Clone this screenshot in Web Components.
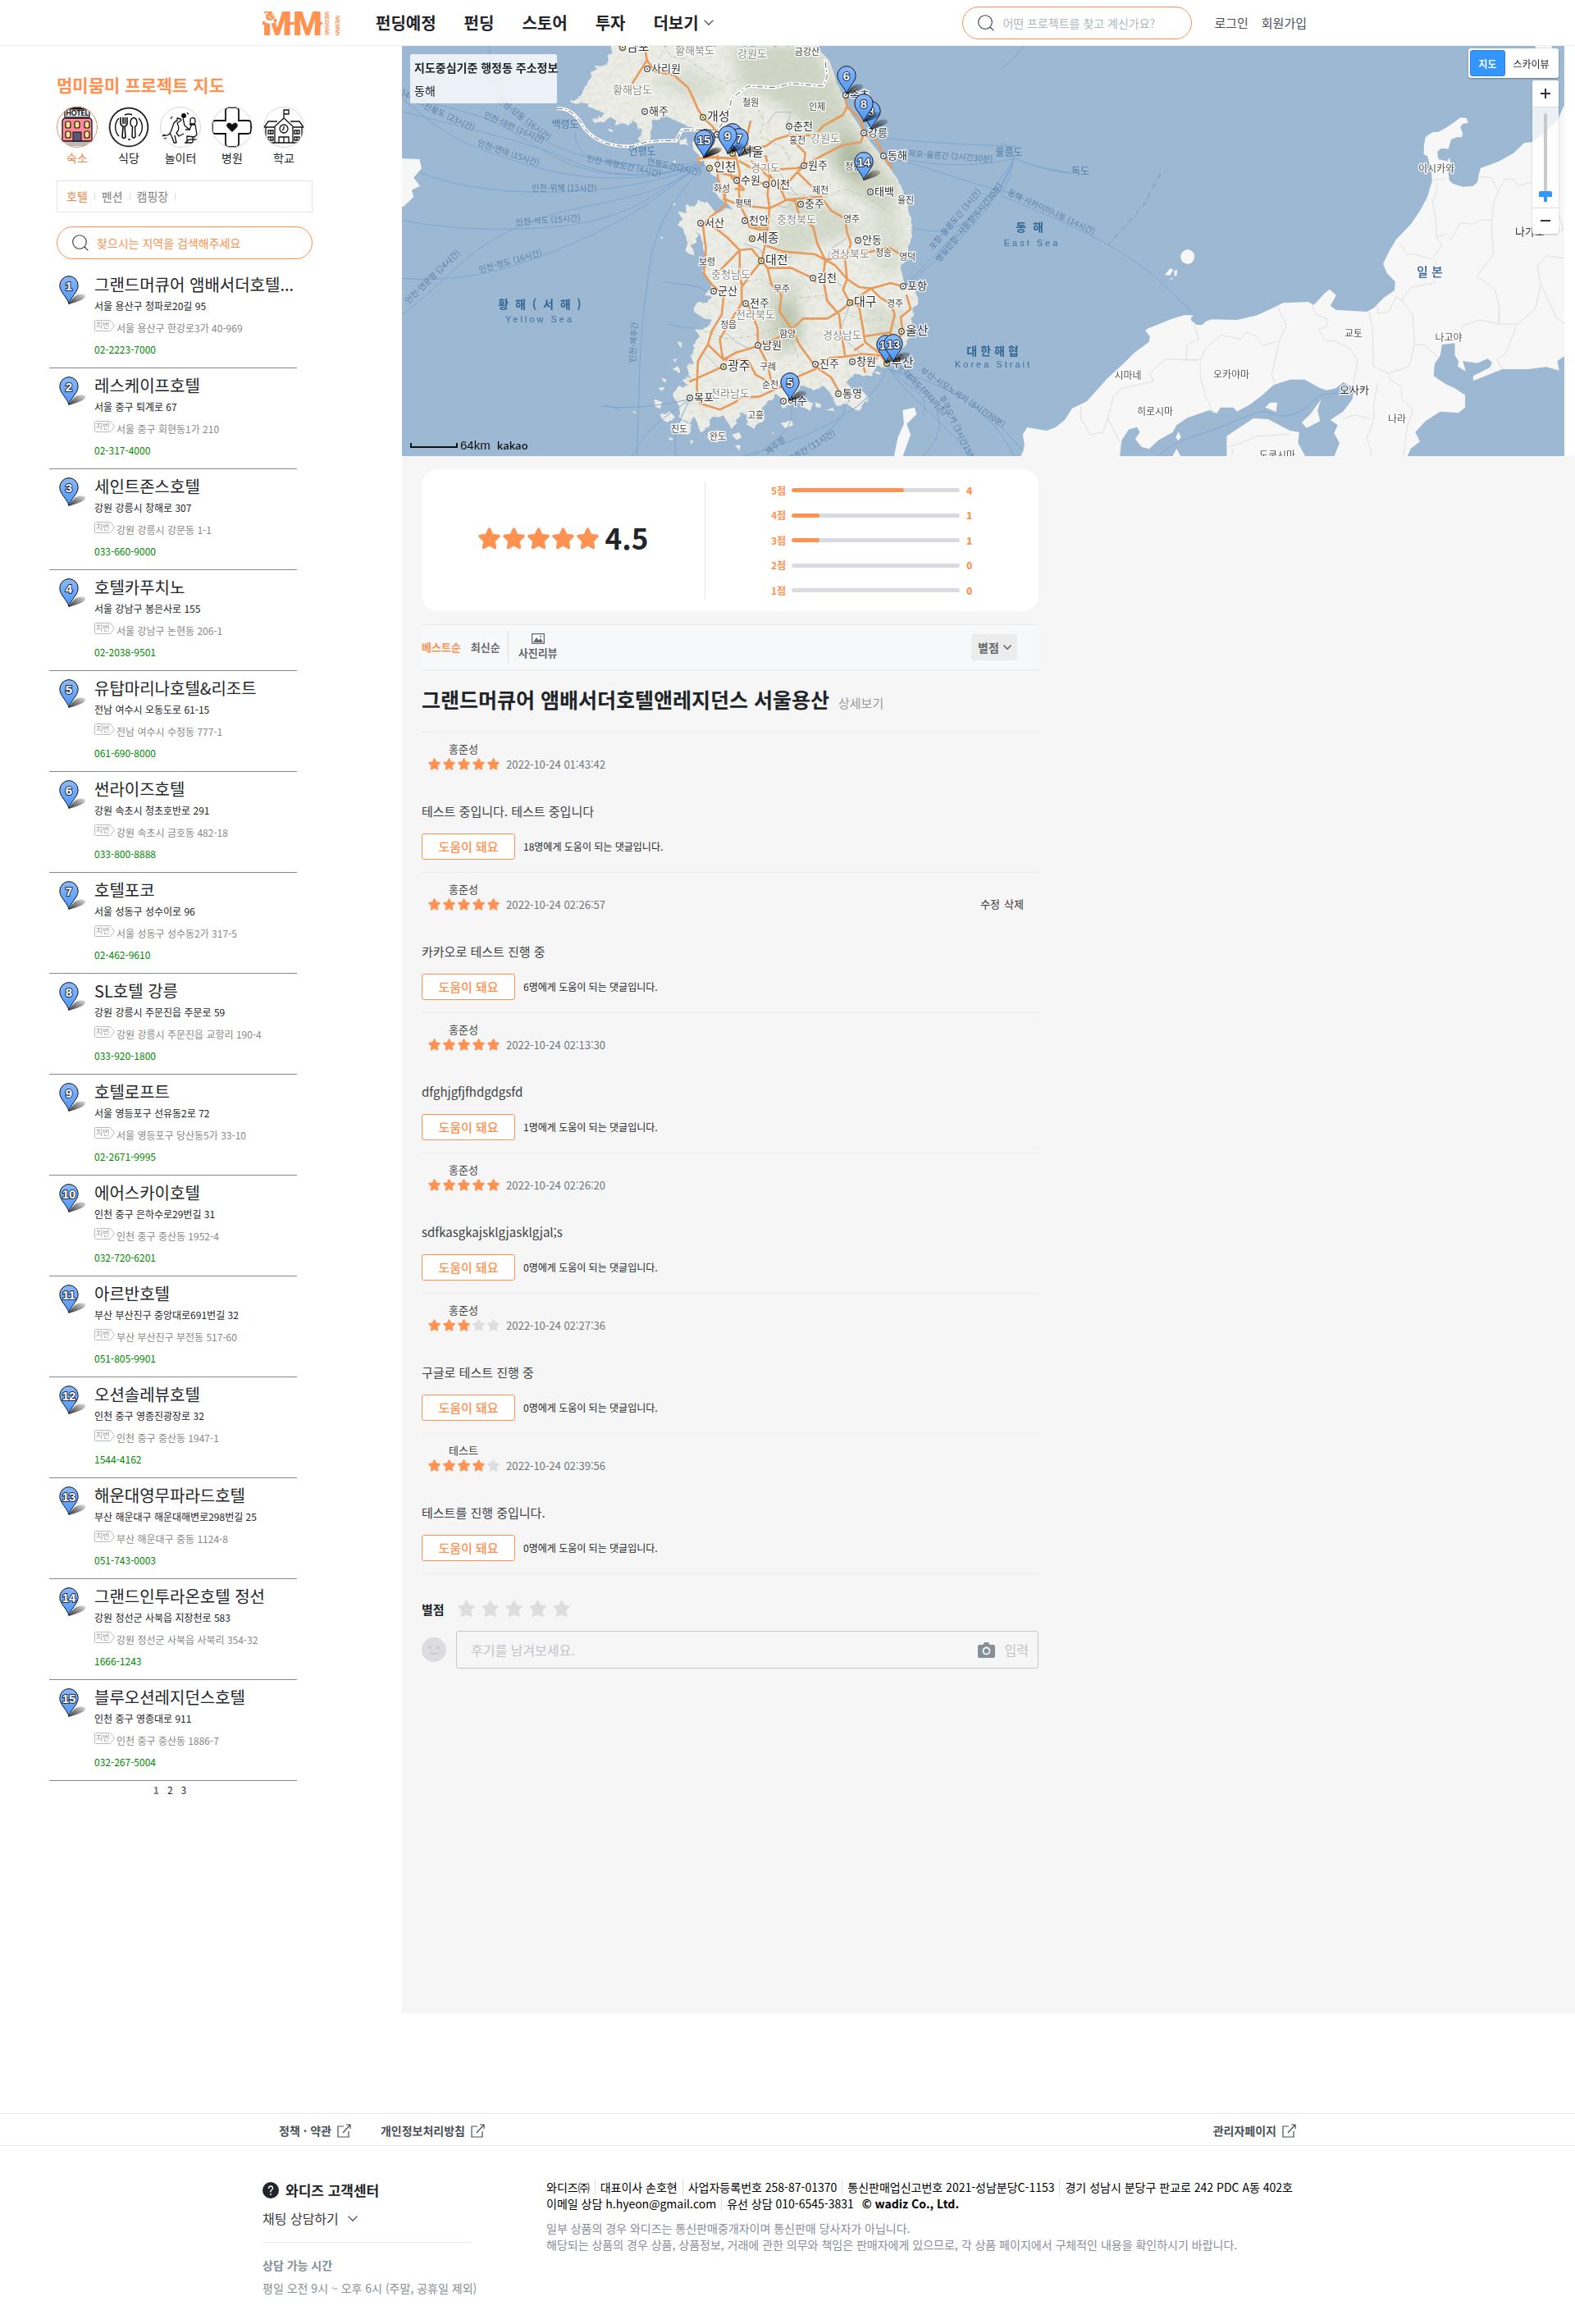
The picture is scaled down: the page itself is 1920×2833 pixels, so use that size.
<!DOCTYPE html>
<html lang="ko">
<head>
<meta charset="utf-8">
<meta name="viewport" content="width=device-width, initial-scale=1">
<title>멈미뭄미 프로젝트 지도</title>
<style>
  html, body { margin: 0; padding: 0; background: #fff; }
  body { font-family: "Noto Sans CJK KR", "Noto Sans", sans-serif; color: #212529; --brand: #ff9151; --line: #ebebeb; }
</style>
</head>
<body>
<mm-page></mm-page>
<script>
const BASE = `
  :host { display: block; box-sizing: border-box; }
  *, *::before, *::after { box-sizing: border-box; }
  a { color: inherit; text-decoration: none; }
  p, h1, h2, h3, ul, ol { margin: 0; padding: 0; }
  ul, ol { list-style: none; }
  button, input, select { font-family: inherit; margin: 0; padding: 0; border: 0; background: none; color: inherit; }
  svg { display: block; flex: none; }
  .wrap { width: 1280px; max-width: 100%; margin: 0 auto; }
`;

class MmElement extends HTMLElement {
  connectedCallback() {
    if (this.shadowRoot) return;
    const root = this.attachShadow({ mode: 'open' });
    root.innerHTML = `<style>${BASE}${this.styles()}</style>${this.markup()}`;
  }
  styles() { return ''; }
  markup() { return '<slot></slot>'; }
}

const magnifier = size => `<svg width="${size}" height="${size}" viewBox="0 0 20 20" fill="none" stroke="#333a40" stroke-width="1.1" aria-hidden="true"><circle cx="9" cy="9" r="8.3"/><path d="M15 15l4.4 4.4"/></svg>`;
const chevron = (w, h, stroke, width) => `<svg width="${w}" height="${h}" viewBox="0 0 12 7" fill="none" stroke="${stroke}" stroke-width="${width}" aria-hidden="true"><path d="M.6.6L6 6.2 11.4.6"/></svg>`;
const external = `<svg width="17" height="17" viewBox="0 0 17 17" fill="none" stroke="#495057" stroke-width="1.2" aria-hidden="true"><path d="M8 3H1v13h13V9M7 11l9-10M11 1h5v5"/></svg>`;

/* Numbered blue pin: body 24x35, the tip at (12, 35), shadow to the right. */
let pinSeq = 0;
const pin = (n, x = 0, y = 0) => {
  const id = 'pin' + (++pinSeq);
  return `<svg x="${x}" y="${y}" width="34" height="37" viewBox="0 0 34 37" role="img">
    <defs><linearGradient id="${id}" x1="0" y1="0" x2="0" y2="1"><stop offset="0" stop-color="#8bb8f8"/><stop offset="1" stop-color="#4a97fb"/></linearGradient>
    <linearGradient id="${id}s" x1="0" y1="1" x2="1" y2="0"><stop offset="0" stop-color="#000" stop-opacity=".8"/><stop offset="1" stop-color="#000" stop-opacity=".12"/></linearGradient></defs>
    <path d="M12 35C15 29 19 23 26 22.500C31 22 34 24 31 27C27 31 17 33 12 35Z" fill="url(#${id}s)"/>
    <path d="M12 34.500C10.500 27 .8 20 .8 12.200A11.200 11.600 0 0 1 23.200 12.200C23.200 20 13.500 27 12 34.500Z" fill="url(#${id})" stroke="#10161f" stroke-width="1"/>
    <text x="12" y="18" text-anchor="middle" font-family="Liberation Sans, sans-serif" font-weight="700" font-size="15" fill="#fff" stroke="#1d2a45" stroke-width="2" paint-order="stroke">${n}</text></svg>`;
};

customElements.define('mm-search', class extends MmElement {
  styles() { return `
    form { display: flex; align-items: center; height: 40px; padding: 0 18px; border: 1px solid var(--brand); border-radius: 20px; gap: 10px; background: #fff; }
    input { flex: 1; min-width: 0; height: 36px; font-size: 14px; outline: 0; }
    input::placeholder { color: var(--hint, #adb5bd); opacity: 1; }`; }
  markup() { const t = this.getAttribute('hint'); return `<form>${magnifier(20)}<input type="text" aria-label="${t}" placeholder="${t}"></form>`; }
});

customElements.define('mm-header', class extends MmElement {
  styles() { return `
    :host { border-bottom: 1px solid #eeeff1; height: 56px; }
    .wrap { display: flex; align-items: center; height: 55px; }
    .logo { margin-right: 42px; } .logo svg { overflow: visible; }
    nav { display: flex; gap: 34px; font-size: 20px; font-weight: 600; line-height: 30px; flex: 1; }
    nav a { display: flex; align-items: center; gap: 6px; }
    mm-search { width: 280px; margin-right: 27px; }
    .user { display: flex; gap: 16px; font-size: 15px; line-height: 24px; color: #495057; padding-right: 7px; }`; }
  markup() { return `<div class="wrap">
    <a class="logo" href="#" aria-label="멈미뭄미"><svg width="96" height="34" viewBox="0 0 96 34" fill="#ff9151">
      <g font-family="Roboto, sans-serif" font-weight="900" font-size="41"><text x="0" y="32">M</text><text x="37" y="32">M</text></g>
      <path d="M0 15h4v4H0zM33 16h6v3h-6zM69 16h4v3h-4z"/>
      <path d="M2 6l4-2 2 2 7-2 4 3 1 5-3 4-7 2-6-1-3-4z" fill="#fff"/>
      <path d="M4 7l4-2 5 1 2 4-4 4-6-1zM13 13l3-2 2 4-3 2z"/><g fill="#fff"><circle cx="8" cy="9" r="1"/><circle cx="12" cy="8" r="1"/><circle cx="10" cy="11" r="1"/></g>
      <g font-family="Liberation Sans, sans-serif" font-weight="700" font-size="7"><text transform="translate(76 3) rotate(90)">MEONMI</text><text transform="translate(89 8) rotate(90)">MEMMI</text></g></svg></a>
    <nav><a href="#">펀딩예정</a><a href="#">펀딩</a><a href="#">스토어</a><a href="#">투자</a><a href="#">더보기 ${chevron(12, 7, '#333', 1.1)}</a></nav>
    <mm-search hint="어떤 프로젝트를 찾고 계신가요?"></mm-search>
    <div class="user"><a href="#">로그인</a><a href="#">회원가입</a></div></div>`; }
});

const CATEGORIES = [
  ['숙소', `<circle cx="25" cy="25" r="25" fill="#fff"/><path d="M7 38h36v5H7z" fill="#d5d5da"/><path d="M10 43h30l-6 5H16z" fill="#b9b9bf"/><path d="M14 4h22l2-1-5-3H17l-6 3z" fill="#111"/><rect x="10" y="3" width="30" height="10" fill="#eceef2" stroke="#111" stroke-width="1.200"/><text x="25" y="10.800" text-anchor="middle" font-family="Lato, sans-serif" font-weight="900" font-size="8.500" fill="#111">HOTEL</text><path d="M7 18q0-3 3-4h30q3 1 3 4v24H7z" fill="#ff8a98" stroke="#111" stroke-width="1.300"/><g fill="#ffe08a" stroke="#111" stroke-width="1.200"><rect x="11" y="18" width="6" height="8" rx="2"/><rect x="22" y="18" width="6" height="8" rx="2"/><rect x="34" y="18" width="6" height="8" rx="2"/><rect x="11" y="30" width="6" height="8" rx="2"/><rect x="34" y="30" width="6" height="8" rx="2"/></g><rect x="20" y="31" width="10" height="11" fill="#5b5874" stroke="#111"/>`],
  ['식당', `<g fill="none" stroke="#111"><circle cx="25" cy="25" r="23.500" stroke-width="2"/><path d="M13 14a16 16 0 0 0 0 22M37 14a16 16 0 0 1 0 22M20 10q5-2 9 0M24 40h3" stroke-width="1.400"/><path d="M15 13v7q0 3 3 4l-1 13q2 3 4 0l-1-13q3-1 3-4v-7M18 13v8M20.500 13v8" stroke-width="1.600"/><path d="M31 13.500c5 1 5 9 1.500 11l.5 12q-2 3-4 0l.5-12c-3.500-2-3.500-10 1.500-11z" stroke-width="1.500"/></g>`],
  ['놀이터', `<g fill="none" stroke="#111" stroke-width="1.300" stroke-linejoin="round"><path d="M4 34q6 3 9-3l3-8q1-5 5-6l0-3 4 1q2 2-1 3l-3 2q4 8-1 12l3 4 6-3M12 32l3 6 2 6h3l-2-9M3 40l5-2M2 36l4-1"/><circle cx="29" cy="11" r="2.300" fill="#111"/><path d="M33 7q1 2 2 2M15 12l-2 3M28 14l2 9 6 5 3-7M37 15q1-2 5-1 2 3 0 7l-5 0zM36 22l7 0 2 12-3 3-9-1v8h-3M37 28l-6 0M32 43q3-4 8-3l6 0M40 37v7h-8"/></g>`],
  ['병원', `<path d="M17 5q0-4 4-4h8q4 0 4 4v12h11q4 0 4 3v9q0 4-4 4H33v12q0 4-4 4h-8q-4 0-4-4V33H5q-4 0-4-4v-9q0-3 4-3h12z" fill="#fff" stroke="#111" stroke-width="1.800"/><path d="M25 31l-6-6c-3-4 3-8 6-3 3-5 9-1 6 3z" fill="#111"/>`],
  ['학교', `<g fill="none" stroke="#111" stroke-width="1.300"><path d="M25 14V4h6v5h-6M25 14L14 24M25 14l11 10M17 18H6l-5 7h13M33 18h11l5 7H36M3 25v19h44V25M14 24v20M36 24v20"/><circle cx="25" cy="27" r="5"/><path d="M25 24v3l-2 2M19 44v-7h12v7M25 37v7M6 29h6v4H6zM38 29h6v4h-6zM6 37h6v4H6zM38 37h6v4h-6zM9 29v4M41 29v4M9 37v4M41 37v4"/></g>`],
];

customElements.define('mm-categories', class extends MmElement {
  styles() { return `
    ul { display: flex; gap: 13px; }
    a { display: flex; flex-direction: column; width: 50px; font-size: 14px; line-height: 24px; text-align: center; align-items: center; }
    .ring { width: 50px; height: 50px; border-radius: 50%; overflow: hidden; position: relative; }
    .ring::after { content: ""; position: absolute; inset: 0; border: 1px solid #cfcfcf; border-radius: 50%; }
    .on { color: #f08548; } .on .ring::after { border-color: #ee7a3c; }`; }
  markup() { return `<ul>${CATEGORIES.map(([t, art], i) => `<li><a href="#" class="${i ? '' : 'on'}"><span class="ring"><svg width="50" height="50" viewBox="0 0 50 50">${art}</svg></span>${t}</a></li>`).join('')}</ul>`; }
});

customElements.define('mm-subtabs', class extends MmElement {
  styles() { return `
    :host { border: 1px solid #e5e5e5; height: 39px; padding: 0 11px; }
    ul { display: flex; align-items: center; height: 36px; font-size: 14px; line-height: 20px; color: #808080; }
    li { display: flex; align-items: center; }
    li::after { content: ""; width: 1px; height: 9px; background: #dcdcdc; margin: 0 8px; }
    .on { color: #f08548; }`; }
  markup() { return `<ul><li class="on"><a href="#">호텔</a></li><li><a href="#">펜션</a></li><li><a href="#">캠핑장</a></li></ul>`; }
});

customElements.define('mm-place', class extends MmElement {
  styles() { return `
    :host { display: flex; gap: 9px; padding: 9px 0 12px 12px; border-bottom: 1px solid #888; }
    .pin { width: 34px; flex: none; padding-top: 1px; }
    .info { min-width: 0; font-size: 12px; line-height: 20px; }
    h3 { font-size: 20px; font-weight: 400; line-height: 24px; white-space: nowrap; }
    .road { margin-top: 4px; }
    .lot { display: flex; gap: 2px; margin-top: 7px; color: #888; white-space: nowrap; }
    .tel { display: block; margin-top: 6px; color: #008a00; }`; }
  markup() { const a = n => this.getAttribute(n); return `<div class="pin">${pin(a('no'))}</div><div class="info"><h3>${a('name')}</h3><p class="road">${a('road')}</p>
    <p class="lot"><svg width="25" height="14" viewBox="0 0 25 14" role="img"><path d="M1.500.5h18l5 6.500-5 6.500h-18q-1 0-1-1v-11q0-1 1-1z" fill="#fff" stroke="#bbb"/><text x="2" y="10" font-size="9" fill="#999">지번</text></svg><span>${a('lot')}</span></p>
    <a class="tel" href="#">${a('tel')}</a></div>`; }
});

const PLACES = [
  ['그랜드머큐어 앰배서더호텔...', '서울 용산구 청파로20길 95', '서울 용산구 한강로3가 40-969', '02-2223-7000'],
  ['레스케이프호텔', '서울 중구 퇴계로 67', '서울 중구 회현동1가 210', '02-317-4000'],
  ['세인트존스호텔', '강원 강릉시 창해로 307', '강원 강릉시 강문동 1-1', '033-660-9000'],
  ['호텔카푸치노', '서울 강남구 봉은사로 155', '서울 강남구 논현동 206-1', '02-2038-9501'],
  ['유탑마리나호텔&amp;리조트', '전남 여수시 오동도로 61-15', '전남 여수시 수정동 777-1', '061-690-8000'],
  ['썬라이즈호텔', '강원 속초시 청초호반로 291', '강원 속초시 금호동 482-18', '033-800-8888'],
  ['호텔포코', '서울 성동구 성수이로 96', '서울 성동구 성수동2가 317-5', '02-462-9610'],
  ['SL호텔 강릉', '강원 강릉시 주문진읍 주문로 59', '강원 강릉시 주문진읍 교항리 190-4', '033-920-1800'],
  ['호텔로프트', '서울 영등포구 선유동2로 72', '서울 영등포구 당산동5가 33-10', '02-2671-9995'],
  ['에어스카이호텔', '인천 중구 은하수로29번길 31', '인천 중구 중산동 1952-4', '032-720-6201'],
  ['아르반호텔', '부산 부산진구 중앙대로691번길 32', '부산 부산진구 부전동 517-60', '051-805-9901'],
  ['오션솔레뷰호텔', '인천 중구 영종진광장로 32', '인천 중구 중산동 1947-1', '1544-4162'],
  ['해운대영무파라드호텔', '부산 해운대구 해운대해변로298번길 25', '부산 해운대구 중동 1124-8', '051-743-0003'],
  ['그랜드인투라온호텔 정선', '강원 정선군 사북읍 지장천로 583', '강원 정선군 사북읍 사북리 354-32', '1666-1243'],
  ['블루오션레지던스호텔', '인천 중구 영종대로 911', '인천 중구 중산동 1886-7', '032-267-5004'],
];

customElements.define('mm-sidebar', class extends MmElement {
  styles() { return `
    .top { padding: 32px 109px 0 69px; }
    h1 { font-size: 21px; font-weight: 700; line-height: 30px; color: var(--brand); margin-bottom: 12px; }
    mm-subtabs { margin: 16px 0 17px; }
    mm-search { --hint: #ff9151; }
    .list { margin: 10px 128px 0 60px; }
    .pages { display: flex; gap: 10px; justify-content: center; font-size: 12px; line-height: 20px; padding: 1px 8px 0 0; }
    .pages .on { font-weight: 700; color: #777; }`; }
  markup() { return `<div class="top"><h1>멈미뭄미 프로젝트 지도</h1><mm-categories></mm-categories><mm-subtabs></mm-subtabs><mm-search hint="찾으시는 지역을 검색해주세요"></mm-search></div>
    <div class="list">${PLACES.map((p, i) => `<mm-place no="${i + 1}" name="${p[0]}" road="${p[1]}" lot="${p[2]}" tel="${p[3]}"></mm-place>`).join('')}
    <nav class="pages"><a class="on" href="#">1</a><a href="#">2</a><a href="#">3</a></nav></div>`; }
});

/* The map is drawn on two sheets, each with its own grid. */
const west = (x, y) => [Math.round(x * .4847 - 10), Math.round(y / 3 - 6)];
const east = (x, y) => [Math.round(x * .4464 + 730), Math.round(y / 3 - 6)];

const KOREA = 'M545 18L550 40 538 48 540 75 528 90 505 95 515 105 495 112 500 135 490 150 480 165 478 185 470 200 450 215 445 225 465 230 490 228 488 240 510 250 530 265 520 275 500 290 505 300 530 292 545 278 560 290 555 310 575 300 590 310 600 290 615 305 612 320 622 318 622 345 612 358 625 372 640 370 645 345 652 320 648 290 665 285 680 270 700 285 720 300 735 310 755 320 772 325 762 345 765 360 750 370 755 400 770 420 765 440 785 450 790 470 800 490 815 500 820 520 805 540 812 560 822 580 838 592 850 612 830 618 812 632 800 610 790 590 765 585 760 605 735 600 735 625 715 625 725 650 712 670 730 690 735 720 740 750 735 770 755 785 750 750 760 735 765 700 775 720 780 760 785 790 790 810 775 840 790 870 800 890 795 905 780 925 800 935 790 960 760 955 755 990 775 1010 800 1020 790 1045 760 1060 770 1080 750 1110 760 1130 745 1150 755 1180 735 1190 745 1230 725 1240 740 1260 715 1270 700 1290 715 1330 720 1380 740 1400 760 1380 770 1430 790 1410 800 1375 830 1370 850 1420 875 1360 890 1370 885 1400 905 1415 935 1385 920 1350 950 1310 960 1290 970 1300 978 1345 1000 1330 1005 1290 1030 1260 1060 1280 1080 1260 1100 1290 1110 1330 1140 1330 1160 1290 1140 1250 1160 1220 1200 1225 1215 1190 1240 1190 1265 1165 1275 1130 1290 1100 1300 1060 1305 1000 1318 950 1310 900 1290 895 1280 860 1275 820 1290 790 1300 730 1303 680 1295 620 1285 570 1270 510 1245 460 1215 400 1190 350 1165 300 1140 240 1125 190 1110 130 1095 70 1060 18Z';
const ISLETS = 'M655 1310l20 10-5 25-15-10zM670 1365l25-10 15 25-20 15-15-10zM700 1400l30-15 20 20-10 35-30-5zM790 1430l30-5 15 25-20 20-25-15zM850 1440l20-10 5 18-15 8zM860 1480l15 5-5 15zM975 1400l25-15 5 20-20 12zM1020 1330l20-15 18 15-15 20zM1060 1320l15 10-10 15zM1085 1350l20-8 5 15zM1150 1290l25-15 20 30-25 50-30-25zM715 1100l12 8-5 15zM700 1200l18-8-2 18zM672 1230l12 5-5 12zM665 1270l15-5-3 20zM700 1160l15 5-8 10zM670 715l8 3-5 8zM700 590l10 5-7 8zM718 360l18-5 4 25-18 2zM700 440l10-3-2 10zM540 320l12 4-8 10zM690 1450l12 4-4 12zM745 1460l12 4-8 16zM950 1430l10 5-9 8zM1210 1215l12-5 2 14zM600 1350l8 4-6 6z';
const JAPAN = 'M1542 225L1520 290 1480 340 1450 370 1430 372 1400 410 1360 440 1310 465 1305 490 1302 515 1290 530 1262 533 1235 522 1225 510 1222 480 1228 450 1226 425 1220 440 1195 432 1192 405 1203 392 1222 395 1230 360 1245 352 1258 352 1262 340 1255 315 1262 302 1276 300 1272 282 1255 280 1235 300 1215 318 1195 332 1180 333 1160 350 1156 380 1155 415 1165 420 1175 470 1178 510 1165 570 1145 620 1120 670 1080 725 1060 770 1044 815 1055 850 1077 880 1075 912 1045 940 1020 975 1000 990 915 983 900 968 916 930 898 908 885 922 855 965 840 954 770 958 745 975 700 1003 645 1020 575 1018 560 1025 550 1038 535 1038 519 1020 520 1010 528 1003 500 1003 470 1015 400 1052 395 1060 407 1080 405 1100 365 1140 335 1180 290 1235 235 1318 195 1343 175 1385 150 1412 125 1425 95 1418 72 1412 60 1440 65 1480 55 1520 325 1520 330 1460 350 1420 372 1412 380 1430 367 1455 385 1485 405 1492 430 1460 470 1430 480 1405 510 1378 570 1350 590 1362 600 1340 635 1340 645 1355 680 1330 710 1300 745 1258 790 1238 830 1238 870 1268 890 1277 915 1270 935 1248 965 1270 960 1310 935 1355 900 1385 920 1405 910 1435 925 1470 910 1520 1110 1520 1120 1490 1145 1465 1132 1430 1160 1390 1200 1355 1250 1360 1268 1340 1268 1295 1240 1270 1215 1255 1182 1225 1185 1180 1200 1150 1205 1110 1240 1105 1240 1150 1250 1170 1248 1190 1270 1208 1262 1170 1300 1178 1330 1162 1342 1175 1335 1195 1290 1225 1290 1243 1370 1200 1440 1200 1490 1192 1525 1205 1520 1170 1542 1150ZM617 1445L650 1415 690 1380 730 1383 790 1425 815 1430 812 1470 832 1520 617 1520ZM875 1310L865 1350 872 1390 835 1415 822 1395 845 1365ZM722 1340L735 1322 755 1322 752 1356ZM478 1450L485 1428 492 1448 485 1462ZM468 1520L480 1492 492 1520ZM1460 18h45v8h-45zM510 762q20 5 19 28-3 25-19 26-20-5-19-30 3-20 19-24zM448 855l15-25 8 8-10 20zM474 840l8-3-2 20-6 3zM460 868l10 0-2 5z';
const PREFECTURES = 'M1180 510Q1200 500 1215 505M1190 520Q1195 560 1178 580L1188 650 1190 720 1205 745 1180 798 1130 780 1110 780 1090 740M1190 720L1215 705 1230 725 1255 665 1290 670 1310 655 1340 655M1305 495L1340 500 1358 550 1345 600 1340 680 1345 780 1300 860 1350 910 1362 980 1358 1030M1358 550L1378 505 1400 505 1415 530 1450 515M1188 800L1185 885 1120 900 1095 950 1125 1000 1130 1110M1030 970L1030 995 1060 990 1080 935 1095 950M1005 990L1015 1050 1018 1190 1060 1215 1115 1190 1130 1110 1155 1110 1198 1160M1250 1100L1262 1040 1310 1020 1360 1035 1410 1035 1380 1140 1355 1165 1370 1200M1410 1035L1460 980 1475 890 1465 820 1490 785 1540 795M1475 890L1500 960 1515 1010 1540 1035M1362 1030L1360 980M850 965L860 1000 890 1015 890 1045 868 1055 885 1095 915 1098 955 1125 975 1170 962 1255M755 970L780 1040 760 1100 740 1220 748 1250M760 1095L715 1115 700 1080 670 1065 655 1090 600 1075 560 1125 545 1165 505 1165 510 1110 540 1090 528 1035M545 1165L545 1230 560 1300 580 1360M535 1168L450 1163 405 1215 418 1245 330 1270 308 1300 292 1380 325 1465M220 1335L218 1380 245 1440 280 1430 292 1380M1060 1215L1065 1240 1095 1265 1095 1310 1125 1350 1110 1410 1100 1518M1030 1250L1018 1330 1020 1380 1000 1450 1015 1518M935 1380L965 1368 1010 1380M620 1485L655 1470 700 1445 790 1438M1525 635L1535 690 1500 700M635 1490L630 1518';
const ROADS = 'M632 30L637 70 655 110 705 125 740 170 755 215 765 250 778 279 800 310 820 345 845 385 855 410M637 70L600 155M862 400L900 390 935 385 960 360 994 345 1060 345 1080 310 1130 270 1140 240 1136 198M1140 240L1175 290 1182 337 1215 365 1232 420 1252 465M870 440L900 465 960 470 1015 465 1050 440 1090 410 1130 380 1175 370 1182 337M994 345L1015 380 1035 410 1031 456 1015 480 1050 530 1075 570 1100 620 1135 650 1140 700 1150 740 1135 800 1140 870 1130 910 1147 957M860 420L870 480 868 540 870 600 885 640 895 680 920 690 940 690 935 740 925 804 940 830 1000 830 1055 868 1060 880M1085 800L1110 820 1140 870 1170 900 1200 905M1147 957L1200 905 1250 885 1281 898M900 440L945 500 940 560 945 610 940 690M885 500L936 526 990 520 1015 480M835 580L870 600 945 612 990 580 1070 570M936 420L945 490 970 530 985 580 1010 585 1020 640 1055 680 1065 740 1085 800 1080 870 1090 950 1120 1000 1125 1060 1135 1150M940 750L980 770 1060 780 1085 800 1140 790 1200 770 1245 755 1275 780M815 420L815 500 835 580 835 600 790 650 778 680 785 760 780 850 800 890 830 930 825 1000 800 1060 790 1110 765 1170 762 1270 770 1325 820 1348 860 1320 870 1305 920 1300 950 1280 980 1260 1020 1225 1060 1200M805 680L840 720 870 765 870 850 875 890M820 840L870 765 900 760 925 804M925 804L900 850 875 900 875 960 840 1040 820 1090 825 1140 829 1165M890 960L915 1050 916 1112 940 1180 950 1250M940 830L950 890 975 930 970 990 1000 1050 1020 1110 1060 1190 1100 1230 1119 1280M829 1165L860 1140 916 1115 960 1090 1000 1055 1030 1015 1090 1015 1125 985 1147 957M1060 1190L1095 1160 1130 1155 1180 1145 1225 1150 1240 1180M1147 957L1170 970 1180 1050 1185 1100 1220 1140M1200 905L1225 940 1250 960 1260 1000 1250 1060 1245 1140M1290 930L1300 980 1275 1010 1280 1062 1260 1120 1240 1150M1185 1080L1250 1065M745 1245L829 1190M829 1165L890 1165 910 1220 940 1245M790 1110L829 1165M845 320L855 420M897 295L890 340 870 400M765 430L800 425 860 430M770 450L765 430M840 430L850 500 880 540M815 480L870 500M842 520L830 580M860 540L880 545M1185 1210L1180 1180 1215 1160M1180 1110L1160 1130M895 680L940 680';
const FERRIES = 'M780 440C700 460 600 470 500 430S350 360 270 210M780 440C700 500 520 520 400 420S270 290 130 240 60 190 21 170M780 440C680 500 560 510 450 440S240 340 21 258M780 440C660 520 480 520 330 450S140 360 21 210M780 445C640 560 260 600 65 480M780 445C650 560 640 600 520 650S160 700 21 655M780 450C660 560 640 620 450 740S150 880 21 868M780 450C700 530 640 560 500 600S260 700 180 800 80 940 21 1000M780 450C700 600 660 640 640 860S620 1100 612 1518M455 335C460 400 480 440 560 445S720 490 780 440M645 430L650 380M240 18Q240 120 280 230M890 18M675 880C720 890 770 890 790 920M690 1035Q720 1050 755 1050M520 1335C600 1350 680 1330 745 1310M530 1330L570 1350M745 1310C700 1360 640 1400 600 1518M745 1310C720 1380 700 1440 710 1518M1182 345C1300 370 1450 380 1568 385M1240 420C1330 450 1440 470 1560 430M1240 425C1350 460 1480 540 1568 560M1281 898C1350 800 1480 620 1560 430M1281 898C1390 780 1530 600 1558 430M1300 680C1380 720 1480 690 1558 440M1245 1200C1300 1300 1350 1360 1460 1518M1245 1200C1310 1280 1350 1300 1330 1370M1245 1200C1400 1260 1500 1340 1560 1518M1245 1200C1350 1250 1420 1400 1330 1518M905 1518C960 1460 1010 1420 1000 1340M1000 1518C1100 1440 1150 1350 1130 1330M1240 1200C1200 1350 1050 1450 880 1518';
const FERRIES_EAST = 'M62 18Q40 60 0 105M0 372Q30 378 35 425M35 425Q80 460 190 482M35 425Q100 470 195 485M35 425Q20 500 0 530M35 425Q30 500 0 560M0 565C100 620 220 690 294 746S430 860 528 1003M430 1518C480 1450 560 1440 640 1390 760 1320 720 1380 780 1370S850 1300 885 1292L940 1285M0 1410L62 1500';

const CITIES = [
  [575,25,'남포',1],[637,102,'사리원'],[631,258,'해주'],[778,279,'개성',1],[994,312,'춘천'],[1182,337,'강릉'],[1232,420,'동해'],[1031,456,'원주'],[794,465,'인천',1],[862,510,'수원'],[936,526,'이천'],[1198,552,'태백'],[1023,598,'충주'],[771,666,'서산'],[883,657,'천안'],[901,722,'세종',1],[1167,730,'안동'],[925,804,'대전',1],[1055,868,'김천'],[804,915,'군산'],[886,961,'전주'],[1281,898,'포항'],[1147,957,'대구',1],[1278,1062,'울산',1],[916,1112,'남원'],[829,1190,'광주',1],[1060,1182,'진주'],[1153,1172,'창원'],[1240,1180,'부산',1],[745,1305,'목포'],[980,1317,'여수'],[1119,1290,'통영'],[1136,198,'속초'],[812,342,'']];
const TOWNS = [[897,225,'철원'],[1064,240,'인제'],[1015,363,'홍천'],[1155,460,'정선'],[825,540,'화성'],[1072,545,'제천'],[878,594,'평택'],[1287,582,'울진'],[1151,650,'영주'],[1231,774,'청송'],[1291,790,'영덕'],[788,806,'보령'],[975,907,'무주'],[1260,960,'경주'],[841,1037,'정읍'],[990,1070,'함양'],[941,1190,'구례'],[946,1256,'순천'],[909,1368,'고흥'],[718,1418,'진도'],[814,1445,'완도'],[1040,38,'금강산']];
const PROVINCES = [[757,35,'황해북도'],[902,48,'강원도'],[600,180,'황해남도'],[1085,358,'강원도'],[934,466,'경기도'],[1012,655,'충청북도'],[1147,780,'경상북도'],[848,856,'충청남도'],[910,1003,'전라북도'],[1129,1077,'경상남도'],[846,1290,'전라남도']];
const ROUTES = [[328,282,'인천-단둥 (16시간)',38],[303,315,'인천-대련 (16시간)',24],[288,407,'인천-연태 (15시간)',19],[140,275,'진황도 (23시간)',25],[45,205,'(24시간)',25],[580,457,'인천-백령도간 (4시간)',12],[705,460,'연평도간(2시간)',12],[430,537,'인천-위해 (13시간)',0],[388,653,'인천-석도 (15시간)',-4],[292,805,'인천-청도 (16시간)',-16],[97,862,'인천-연운항 (24시간)',-44],[603,1100,'인천-제주간',-86],[1400,421,'묵호-울릉간 (2시간30분)',4],[1412,650,'포항-울릉도간 (3시간)',-50],[1446,662,'영일만항~사동항(6시간30분)',-50],[1432,1302,'부산-시모노세키 (8시간30분)',34],[1322,1262,'부산-대마도(히타카츠)',46],[1420,1420,'후쿠오카 (3시간15분)',64],[960,1478,'제주항',-38],[1050,1482,'제주간 (11시간)',-32]];
const JP = [[1190,467,'이시카와'],[1446,700,'나가노','jb'],[963,1070,'교토'],[1224,1085,'나고야'],[348,1223,'시마네'],[630,1222,'오카야마'],[965,1278,'오사카','jb'],[421,1355,'히로시마'],[1082,1382,'나라'],[755,1515,'도쿠시마']];
const PINS = [[852,405,1],[785,425,10],[1200,325,3],[1183,298,8],[1139,195,6],[1182,510,14],[780,430,15],[868,422,7],[840,415,9],[1237,1180,11],[1256,1175,13],[996,1317,5]];

customElements.define('mm-map', class extends MmElement {
  styles() { return `
    :host { position: relative; height: 500px; overflow: hidden; background: #9db8d2; }
    .city { font-size: 13px; fill: #333; } .big { font-size: 15px; }
    .town { font-size: 11px; fill: #444; } .prov { font-size: 13px; fill: #8b8d8b; }
    .city, .town, .prov, .jp, .jb, .nation { stroke: #fff; stroke-width: 3px; stroke-opacity: .8; paint-order: stroke; stroke-linejoin: round; }
    .isle { font-size: 12px; fill: #4b79a6; } .route { font-size: 10px; fill: #5b80a8; }
    .sea { font-size: 14px; font-weight: 700; fill: #2f6690; } .seaen { font-size: 11px; fill: #3b719b; letter-spacing: 3px; font-family: "Liberation Sans", sans-serif; }
    .jp { font-size: 12px; fill: #555; } .jb { font-size: 13px; fill: #333; } .nation { font-size: 15px; font-weight: 600; fill: #4a74a5; }
    .mid { text-anchor: middle; }
    .panel { position: absolute; z-index: 1; }
    .info { left: 10px; top: 10px; width: 179px; height: 60px; padding: 4px 5px; background: rgba(255,255,255,.8); border-radius: 2px; font-size: 14px; white-space: nowrap; }
    .info h2 { font-size: 14px; font-weight: 700; line-height: 24px; margin-bottom: 4px; } .info p { line-height: 24px; }
    .kind { right: 7px; top: 3px; display: flex; width: 110px; height: 36px; padding: 2px; background: #fff; border-radius: 3px; box-shadow: 0 1px 2px rgba(0,0,0,.35); }
    .kind button { flex: 1; font-size: 12px; } .kind .on { flex: 0 0 43px; background: #3396ff; border: 1px solid #2a84e8; border-radius: 3px; color: #fff; font-weight: 600; }
    .zoom { right: 7px; top: 42px; width: 32px; height: 187px; display: flex; flex-direction: column; background: rgba(255,255,255,.8); border-radius: 3px; overflow: hidden; box-shadow: 0 1px 2px rgba(0,0,0,.25); }
    .zoom button { height: 32px; background: #fff; display: flex; align-items: center; justify-content: center; }
    .zoom div { flex: 1; border: solid #ddd; border-width: 1px 0; display: flex; justify-content: center; padding: 7px 0; }
    input { appearance: none; writing-mode: vertical-lr; direction: rtl; width: 16px; height: 108px; }
    input::-webkit-slider-runnable-track { width: 4px; height: 108px; background: #c9c9c9; border-radius: 2px; margin: 0 auto; }
    input::-webkit-slider-thumb { appearance: none; width: 16px; height: 13px; margin-left: -6px; background: linear-gradient(#3396ff,#3396ff) top/16px 7px no-repeat, linear-gradient(#3396ff,#3396ff) bottom/4px 8px no-repeat; border-radius: 2px; }
    .scale { left: 10px; bottom: 3px; display: flex; align-items: center; gap: 3px; color: #111; font: 15px/20px "Liberation Sans", sans-serif; }
    .scale i { width: 58px; height: 6px; border: 2px solid #111; border-top: 0; }
    .scale b { font: 600 13px/20px "Open Sans", sans-serif; margin-left: 5px; }`; }
  markup() {
    const t = (c, p, s, rot) => `<text class="${c}" x="${p[0]}" y="${p[1] + 4}"${rot ? ` transform="rotate(${rot} ${p[0]} ${p[1]})"` : ''}>${s}</text>`;
    const ring = (p, y) => `<circle cx="${p[0]}" cy="${p[1]}" r="3.300" fill="${y ? '#fff3b0' : '#fff'}" stroke="#444" stroke-width="1.200"/><circle cx="${p[0]}" cy="${p[1]}" r="1" fill="#444"/>`;
    const W = 'transform="matrix(.4847 0 0 .33333 -10 -6)"', E = 'transform="matrix(.4464 0 0 .33333 730 -6)"', ns = 'vector-effect="non-scaling-stroke"';
    return `<svg width="1600" height="500" viewBox="0 0 1600 500" role="img" aria-label="지도">
      <defs><clipPath id="land"><path d="${KOREA}"/></clipPath><filter id="soft" x="-50%" y="-50%" width="200%" height="200%"><feGaussianBlur stdDeviation="16"/></filter>
      <filter id="relief" x="0" y="0" width="100%" height="100%"><feTurbulence type="fractalNoise" baseFrequency=".06" numOctaves="4" seed="7"/><feColorMatrix values="0 0 0 0 .52  0 0 0 0 .58  0 0 0 0 .46  0 0 0 2.400 -1.050"/></filter>
      <filter id="rough" x="-5%" y="-5%" width="110%" height="110%"><feTurbulence type="fractalNoise" baseFrequency=".12" numOctaves="2" seed="3"/><feDisplacementMap in="SourceGraphic" scale="6"/></filter></defs>
      <g ${W}><path d="M21 430L65 432 70 465 50 500 66 530 45 545 50 570 25 605H0V430Z" fill="#f7f7f7"/><path d="M1280 1350l30-10 5 25-25 35 10 40-20 80h-22l10-70 15-50z" fill="#f7f7f7"/></g>
      <g filter="url(#rough)"><g ${W}><path d="${KOREA}${ISLETS}" fill="#ecede6"/></g></g>
      <g ${W}><g clip-path="url(#land)"><g filter="url(#soft)" fill="#c3ccb8">
        <path d="M850 18h200l70 150 30 120 60 130 60 120-20 80-80-40-60-100-60-120-60-110-120-90z" opacity=".7"/><path d="M1000 560l150 60 20 80-100 40-90 60-30-70zM950 860l70 20 10 220-60 60-50-80z" opacity=".55"/><path d="M1210 560l60 60 20 200-60 40-40-120zM1180 960l90 20 10 90-80 60zM640 150l100-60 90 80-60 60z" opacity=".4"/><path d="M1130 330l60 90-10 100-60-60z" fill="#9aab8c" opacity=".65"/><path d="M960 960l50 0 10 120-40 40z" fill="#9aab8c" opacity=".45"/></g>
        <rect x="440" y="10" width="900" height="1440" filter="url(#relief)" opacity=".26"/></g>
        <g fill="none" stroke="#a9bdcf" stroke-width="1"><path ${ns} d="M940 300l20-40 40 0-10 40 10 60M960 600l30 10 20-30M880 740l40 20 20 50 60-20M870 400l60 20 40 60 40 80M1147 957l-10 50-20 60 60 80 30 40M1140 720l-40 40-20 80 50 60M830 1060l30 40 40 30M780 1140l40 60"/></g>
        <g fill="none" stroke="#c2c0ad" stroke-width="1" stroke-dasharray="4 2 1 2"><path ${ns} d="M680 18l20 40 40 10 60 60 40 30 30-20M870 170l40 60 20 60-10 60 60 40 20 60M940 520l60 40 90 10 40-30 60 30 60 60M880 640l60 0 40 60-20 90 60 60 30 60M800 920l60-30 60-20 40 30 50 40M780 1060l60 30 60-10 60-30 40 40 20 80M1020 940l60-10 40 60 60 30 60 0 40 40"/></g>
        <path ${ns} d="M410 247Q450 240 480 320 520 390 600 385 640 360 710 365L725 325 815 325 840 270 850 210 890 165 960 170 1000 155 1080 165 1090 130 1085 70" fill="none" stroke="#fff" stroke-width="4"/><path ${ns} d="M410 247Q450 240 480 320 520 390 600 385 640 360 710 365L725 325 815 325 840 270 850 210 890 165 960 170 1000 155 1080 165 1090 130 1085 70" fill="none" stroke="#666" stroke-width="1" stroke-dasharray="7 3 2 3"/>
        <path ${ns} d="${FERRIES}" fill="none" stroke="#7ca6d0" stroke-width="1"/>
        <path ${ns} d="${ROADS}" fill="none" stroke="#e89a5b" stroke-width="2.600" stroke-linejoin="round" stroke-linecap="round"/></g>
      <g ${E}><path d="${JAPAN}" fill="#f7f7f7"/><path ${ns} d="${PREFECTURES}" fill="none" stroke="#dfdfdf" stroke-width="1"/><path ${ns} d="${FERRIES_EAST}" fill="none" stroke="#7ca6d0" stroke-width="1"/><path ${ns} d="M436 486L390 600 294 746" fill="none" stroke="#7d8b9b" stroke-dasharray="6 3 1 3"/></g>
      ${ROUTES.map(r => t('route mid', west(r[0], r[1]), r[2], r[3])).join('')}
      ${t('route mid', east(140, 625), '동해-사카이미나토 (14시간)', 25)}
      ${PROVINCES.map(p => t('prov mid', west(p[0], p[1]), p[2])).join('')}
      ${TOWNS.map(p => t('town mid', west(p[0], p[1]), p[2])).join('')}
      ${CITIES.map(c => { const p = west(c[0], c[1]); return ring(p, c[3]) + t('city' + (c[3] ? ' big' : ''), [p[0] + 5, p[1]], c[2]); }).join('')}
      ${ring(west(852, 412), 1)}${t('city big', west(872, 408), '서울')}
      ${t('isle mid', west(432, 305), '백령도')}${t('isle mid', west(625, 405), '연평도')}${t('isle mid', east(22, 408), '울릉도')}${t('isle mid', east(218, 478), '독도')}
      ${t('sea mid', west(367, 967), '황&#160; 해&#160; (&#160; 서&#160; 해&#160; )')}${t('seaen mid', west(368, 1018), 'Yellow Sea')}
      ${t('sea mid', east(78, 685), '동&#160; 해')}${t('seaen mid', east(85, 737), 'East Sea')}
      ${t('sea mid', [720, 373], '대&#160;한&#160;해&#160;협')}${t('seaen mid', [721, 388], 'Korea Strait')}
      ${JP.map(p => t((p[3] || 'jp') + ' mid', east(p[0], p[1]), p[2])).join('')}${t('nation mid', east(1172, 850), '일 본')}
      ${PINS.map(p => { const q = west(p[0], p[1]); return pin(p[2], q[0] - 12, q[1] - 35); }).join('')}
    </svg>
    <div class="panel info"><h2>지도중심기준 행정동 주소정보</h2><p>동해</p></div>
    <div class="panel kind"><button class="on" type="button">지도</button><button type="button">스카이뷰</button></div>
    <div class="panel zoom"><button type="button" aria-label="확대"><svg width="12" height="12" stroke="#333" stroke-width="2"><path d="M6 0v12M0 6h12"/></svg></button><div><input type="range" min="1" max="14" value="1" aria-label="확대 단계"></div><button type="button" aria-label="축소"><svg width="12" height="12" stroke="#333" stroke-width="2"><path d="M0 6h12"/></svg></button></div>
    <div class="panel scale"><i></i>64km<b>kakao</b></div>`;
  }
});

const STAR = 'M12 .8c.5 0 .8.3 1 .7l2.700 5.900 6.600.9c1 .2 1.300 1.200.6 1.900l-4.900 4.700 1.100 6.700c.1.900-.7 1.500-1.500 1.100L12 19.600l-5.600 3.100c-.8.4-1.600-.2-1.500-1.100l1.100-6.700L1.100 10.200c-.7-.7-.4-1.700.6-1.900l6.600-.9L11 1.500c.2-.4.5-.7 1-.7z';
customElements.define('mm-stars', class extends MmElement {
  styles() { return `:host { display: inline-flex; gap: 3px; }`; }
  markup() { const s = this.getAttribute('size'), v = +this.getAttribute('value'); return [1, 2, 3, 4, 5].map(i => `<svg width="${s}" height="${s}" viewBox="0 0 24 24" aria-hidden="true"><path d="${STAR}" fill="${i <= v ? '#ff9151' : '#dddee2'}" stroke="${i <= v ? '#ff9151' : '#dddee2'}"/></svg>`).join(''); }
});

customElements.define('mm-summary', class extends MmElement {
  styles() { return `
    :host { display: flex; align-items: center; height: 173px; background: #fff; border-radius: 20px; }
    .score { flex: 0 0 46%; display: flex; justify-content: center; align-items: center; gap: 8px; height: 142px; padding-bottom: 4px; border-right: 1px solid #e6e6e6; font-size: 35px; font-weight: 700; line-height: 44px; }
    .score span { padding-bottom: 4px; }
    .bars { flex: 1; display: flex; flex-direction: column; justify-content: space-between; height: 140px; }
    .bars li { display: flex; justify-content: center; align-items: center; height: 18px; font-size: 12px; line-height: 18px; font-weight: 700; color: var(--brand); }
    .bars span { width: 25px; white-space: nowrap; } .bars b { width: 8px; margin-left: 8px; }
    .track { width: 205px; height: 5px; border-radius: 3px; background: #dadbe0; overflow: hidden; }
    .track i { display: block; height: 5px; border-radius: 3px; background: var(--brand); }`; }
  markup() { const n = [4, 1, 1, 0, 0]; return `<div class="score"><mm-stars size="27" value="5"></mm-stars><span>4.5</span></div>
    <ul class="bars">${n.map((c, i) => `<li><span>${5 - i}점</span><div class="track"><i style="width:${Math.round(c / 6 * 205)}px"></i></div><b>${c}</b></li>`).join('')}</ul>`; }
});

customElements.define('mm-toolbar', class extends MmElement {
  styles() { return `
    :host { display: flex; align-items: center; height: 56px; border: solid var(--line); border-width: 1px 0; background: #f7f8fa; font-size: 13px; font-weight: 600; line-height: 20px; color: #666a6e; }
    a { margin-right: 12px; } .on { color: var(--brand); }
    .photo { display: flex; flex-direction: column; align-items: center; gap: 1px; padding-left: 12px; border-left: 1px solid #e2e2e2; height: 40px; margin: 0 auto 0 -3px; justify-content: center; }
    label { position: relative; display: flex; align-items: center; margin-right: 26px; }
    select { appearance: none; width: 56px; height: 32px; padding-left: 8px; border-radius: 3px; background: #ececec; font-size: 14px; font-weight: 600; color: #666a6e; }
    label svg { position: absolute; right: 7px; }`; }
  markup() { return `<a class="on" href="#">베스트순</a><a href="#">최신순</a>
    <a class="photo" href="#"><svg width="16" height="13" viewBox="0 0 16 13"><rect x=".7" y=".7" width="14.600" height="11.600" fill="#fff" stroke="#666a6e" stroke-width="1.300"/><path d="M2 11l4-6 2.500 3.500L11 6l3 5z" fill="#666a6e"/><circle cx="11" cy="3.800" r="1" fill="#666a6e"/></svg>사진리뷰</a>
    <label><select aria-label="별점"><option>별점</option></select>${chevron(10, 6, '#666', 1.8)}</label>`; }
});

customElements.define('mm-review', class extends MmElement {
  styles() { return `
    :host { border-top: 1px solid var(--line); padding: 11px 0 15px; height: 171px; }
    .name { font-size: 13px; line-height: 18px; padding-left: 33px; color: #444; }
    .meta { display: flex; align-items: center; gap: 8px; height: 18px; padding-left: 8px; font-size: 13px; color: #6f757b; }
    .own { display: flex; gap: 5px; margin-left: auto; padding-right: 18px; color: #333; }
    .body { font-size: 15px; line-height: 22px; margin: 38px 0 16px; color: #3d4145; }
    .act { display: flex; align-items: center; gap: 10px; font-size: 12px; line-height: 20px; }
    button { width: 114px; height: 32px; padding-bottom: 2px; border: 1px solid var(--brand); border-radius: 3px; background: #fff; color: var(--brand); font-size: 15px; font-weight: 500; }
    .own button { width: auto; height: 18px; padding: 0; border: 0; background: none; color: #333; font-size: 13px; line-height: 18px; font-weight: 400; }`; }
  markup() { const a = n => this.getAttribute(n); return `<p class="name">${a('name')}</p>
    <div class="meta"><mm-stars size="15" value="${a('stars')}"></mm-stars><span>${a('date')}</span>${this.hasAttribute('own') ? '<span class="own"><button type="button">수정</button><button type="button">삭제</button></span>' : ''}</div>
    <p class="body"><slot></slot></p><div class="act"><button type="button">도움이 돼요</button><span>${a('helped')}명에게 도움이 되는 댓글입니다.</span></div>`; }
});

customElements.define('mm-review-form', class extends MmElement {
  styles() { return `
    :host { border-top: 1px solid var(--line); padding-top: 30px; }
    .rate { display: flex; align-items: center; height: 24px; font-size: 15px; font-weight: 700; gap: 16px; margin-bottom: 15px; }
    .rate div { display: flex; gap: 7px; }
    input[type=radio] { appearance: none; width: 22px; height: 22px; background: #dddddd; clip-path: polygon(50% 0, 66% 30%, 99% 35%, 76% 60%, 82% 97%, 50% 84%, 18% 97%, 24% 60%, 1% 35%, 34% 30%); }
    .write { display: flex; align-items: center; gap: 12px; }
    .box { flex: 1; display: flex; align-items: center; height: 46px; padding: 0 11px 0 17px; border: 1px solid #c3cad0; border-radius: 3px; }
    input[type=text] { flex: 1; min-width: 0; height: 40px; font-size: 16px; outline: 0; } input::placeholder { color: #bfc4ca; opacity: 1; }
    .send { margin-left: 12px; font-size: 16px; line-height: 24px; color: #bfc4ca; }`; }
  markup() { return `<div class="rate"><span>별점</span><div>${[1, 2, 3, 4, 5].map(i => `<input type="radio" name="rate" value="${i}" aria-label="${i}점">`).join('')}</div></div>
    <div class="write"><svg width="30" height="30" viewBox="0 0 30 30"><circle cx="15" cy="15" r="15" fill="#dcdde0"/><g fill="#bfc1c6"><circle cx="10" cy="12.500" r="1.500"/><circle cx="20" cy="12.500" r="1.500"/></g><path d="M10.500 18.500q4.500 3.500 9 0" fill="none" stroke="#bfc1c6" stroke-width="1.500"/></svg>
    <div class="box"><input type="text" aria-label="후기" placeholder="후기를 남겨보세요."><button type="button" aria-label="사진 첨부"><svg width="21" height="19" viewBox="0 0 21 19"><path d="M2 3h4.500l1.500-3h5l1.500 3H19q2 0 2 2v12q0 2-2 2H2q-2 0-2-2V5q0-2 2-2z" fill="#868e96"/><circle cx="10.500" cy="10.500" r="4" fill="none" stroke="#f6f6f6" stroke-width="1.800"/></svg></button><button class="send" type="button">입력</button></div></div>`; }
});

customElements.define('mm-main', class extends MmElement {
  styles() { return `
    :host { background: #f6f6f6; }
    .mapbar { background: #fff; padding-right: 13px; }
    .col { max-width: 776px; padding: 16px 0 420px 24px; }
    mm-toolbar { margin-top: 16px; }
    .title { display: flex; align-items: flex-end; gap: 11px; margin: 17px 0 22px; }
    h2 { font-size: 25px; font-weight: 700; line-height: 36px; } .title a { font-size: 15px; line-height: 26px; color: #999; }`; }
  markup() { return `<div class="mapbar"><mm-map></mm-map></div><div class="col"><mm-summary></mm-summary><mm-toolbar></mm-toolbar>
    <div class="title"><h2>그랜드머큐어 앰배서더호텔앤레지던스 서울용산</h2><a href="#">상세보기</a></div>
    <mm-review name="홍준성" stars="5" date="2022-10-24 01:43:42" helped="18">테스트 중입니다. 테스트 중입니다</mm-review>
    <mm-review name="홍준성" stars="5" date="2022-10-24 02:26:57" helped="6" own>카카오로 테스트 진행 중</mm-review>
    <mm-review name="홍준성" stars="5" date="2022-10-24 02:13:30" helped="1">dfghjgfjfhdgdgsfd</mm-review>
    <mm-review name="홍준성" stars="5" date="2022-10-24 02:26:20" helped="0">sdfkasgkajsklgjasklgjal;s</mm-review>
    <mm-review name="홍준성" stars="3" date="2022-10-24 02:27:36" helped="0">구글로 테스트 진행 중</mm-review>
    <mm-review name="테스트" stars="4" date="2022-10-24 02:39:56" helped="0">테스트를 진행 중입니다.</mm-review>
    <mm-review-form></mm-review-form></div>`; }
});

customElements.define('mm-footer', class extends MmElement {
  styles() { return `
    :host { margin-top: 122px; font-size: 14px; line-height: 20px; }
    nav { border: solid #e4e6ea; border-width: 1px 0; }
    nav .wrap { display: flex; align-items: center; height: 38px; gap: 36px; padding: 0 20px; font-weight: 600; color: #495057; }
    nav a { display: flex; align-items: center; gap: 7px; padding-top: 2px; } nav a:last-child { margin-left: auto; }
    .cols { display: flex; gap: 92px; padding: 40px 0 33px; }
    .help { width: 254px; flex: none; padding-top: 2px; }
    h2 { display: flex; align-items: center; gap: 8px; font-size: 17px; line-height: 24px; font-weight: 700; }
    .chat { display: flex; align-items: center; gap: 11px; font-size: 16px; line-height: 24px; margin: 10px 0 17px; color: #343a40; }
    .hours { border-top: 1px solid #e6e8eb; padding-top: 17px; color: #868e96; white-space: nowrap; }
    .hours b { display: block; font-weight: 600; margin-bottom: 8px; }
    .row { display: flex; color: #000; } .row span + span { margin-left: 6px; padding-left: 6px; border-left: 1px solid #dcdfe3; } .row b { margin-left: 10px; font-weight: 700; }
    .note { margin-top: 10px; color: #8a8d9a; }`; }
  markup() { return `<nav><div class="wrap"><a href="#">정책 · 약관 ${external}</a><a href="#">개인정보처리방침 ${external}</a><a href="#">관리자페이지 ${external}</a></div></nav>
    <div class="wrap cols"><section class="help"><h2><svg width="20" height="20" viewBox="0 0 20 20"><circle cx="10" cy="10" r="10" fill="#212529"/><path d="M7.500 8Q7.500 5 10 5t2.500 2.500Q12.500 9 10 10.500v2" fill="none" stroke="#fff" stroke-width="1.400"/><circle cx="10" cy="15" r=".9" fill="#fff"/></svg>와디즈 고객센터</h2>
    <button class="chat" type="button">채팅 상담하기 ${chevron(12, 7, '#333', 1.1)}</button>
    <p class="hours"><b>상담 가능 시간</b>평일 오전 9시 ~ 오후 6시 (주말, 공휴일 제외)</p></section>
    <section><p class="row"><span>와디즈㈜</span><span>대표이사 손호현</span><span>사업자등록번호 258-87-01370</span><span>통신판매업신고번호 2021-성남분당C-1153</span><span>경기 성남시 분당구 판교로 242 PDC A동 402호</span></p>
    <p class="row"><span>이메일 상담 h.hyeon@gmail.com</span><span>유선 상담 010-6545-3831</span><b>© wadiz Co., Ltd.</b></p>
    <p class="note">일부 상품의 경우 와디즈는 통신판매중개자이며 통신판매 당사자가 아닙니다.<br>해당되는 상품의 경우 상품, 상품정보, 거래에 관한 의무와 책임은 판매자에게 있으므로, 각 상품 페이지에서 구체적인 내용을 확인하시기 바랍니다.</p></section></div>`; }
});

customElements.define('mm-page', class extends MmElement {
  styles() { return `.cols { display: flex; } mm-sidebar { flex: 0 0 490px; } mm-main { flex: 1; min-width: 0; }`; }
  markup() { return `<mm-header></mm-header><div class="cols"><mm-sidebar></mm-sidebar><mm-main></mm-main></div><mm-footer></mm-footer>`; }
});
</script>
</body>
</html>
